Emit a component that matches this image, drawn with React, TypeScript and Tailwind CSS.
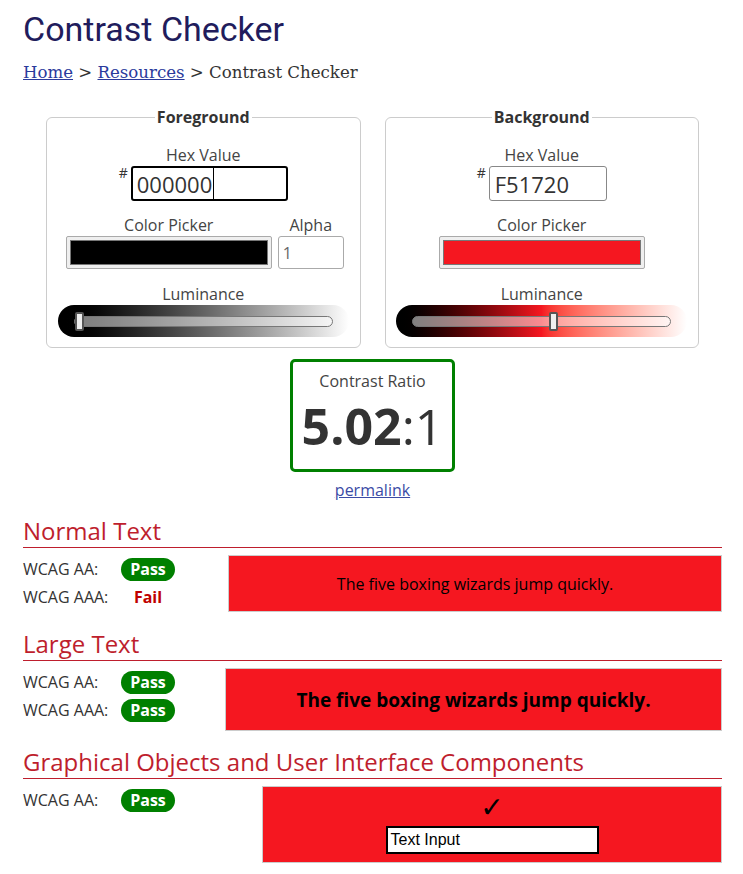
import React from 'react';

const body = "font-['Open_Sans',sans-serif]";

function Badge({ pass }: { pass: boolean }) {
    if (!pass) {
        return <span className="inline-flex h-[23px] w-[54px] items-center justify-center font-bold text-[#c00000]">Fail</span>;
    }
    return (
        <span className="inline-flex h-[23px] w-[54px] items-center justify-center rounded-full bg-[#008000] font-bold text-white">
            Pass
        </span>
    );
}

function Row({ label, pass }: { label: string; pass: boolean }) {
    return (
        <div className="flex h-[28px] items-center">
            <span className="w-[98px] text-[#333]">{label}</span>
            <Badge pass={pass} />
        </div>
    );
}

function Slider({ gradient, thumb }: { gradient: string; thumb: number }) {
    return (
        <div className={`mx-auto flex h-[32px] w-[291px] items-center rounded-full px-[16px] ${gradient}`}>
            <div className="relative h-[11px] flex-1 rounded-full border border-[#777] bg-white/50">
                <div
                    className="absolute top-[-5px] h-[19px] w-[9px] rounded-[2px] border-2 border-[#555] bg-[#eee]"
                    style={{ left: thumb }}
                />
            </div>
        </div>
    );
}

function Swatch({ color }: { color: string }) {
    return (
        <div className="flex h-[33px] w-[206px] rounded-[2px] border border-[#aaa] bg-[#efefef] p-[3px]">
            <div className={`flex-1 border border-[#777] ${color}`} />
        </div>
    );
}

export default function App() {
    return (
        <div className={`min-h-[874px] bg-white pl-[23px] pr-[21px] pt-[9px] ${body} text-[16px] leading-[22px] text-[#444]`}>
            <h1 className="font-['Roboto',sans-serif] text-[34px] leading-[40px] text-[#211c5c]">Contrast Checker</h1>

            <nav className="mt-[11px] font-['DejaVu_Serif',serif] text-[16.6px] leading-[26px] text-[#333]">
                <a className="text-[#2a3a9c] underline">Home</a> &gt; <a className="text-[#2a3a9c] underline">Resources</a> &gt; Contrast Checker
            </nav>

            <div className="mt-[20px] grid grid-cols-2 gap-[24px] px-[23px]">
                {/* Foreground */}
                <fieldset className="rounded-[6px] border border-[#ccc] px-[10px] pb-[10px]">
                    <legend className="mx-auto px-[2px] font-bold text-[#333]">Foreground</legend>
                    <div className="mt-[16px] text-center">Hex Value</div>
                    <div className="flex justify-center">
                        <span className="mr-[3px] text-[14px] leading-[14px] text-[#333]">#</span>
                        <div className="flex h-[35px] w-[157px] items-center rounded-[3px] border-2 border-black pl-[4px] text-[22px] text-[#333]">
                            000000<span className="ml-[1px] h-[33px] w-px bg-black" />
                        </div>
                    </div>
                    <div className="mt-[13px] flex justify-center gap-[6px] pl-[3px]">
                        <div className="flex flex-col items-center">
                            <span>Color Picker</span>
                            <Swatch color="bg-black" />
                        </div>
                        <div className="flex flex-col items-center">
                            <span>Alpha</span>
                            <div className="flex h-[33px] w-[66px] items-center rounded-[3px] border border-[#aaa] px-[4px] text-[#666]">1</div>
                        </div>
                    </div>
                    <div className="mt-[14px] text-center">Luminance</div>
                    <Slider gradient="bg-gradient-to-r from-black to-white" thumb={0} />
                </fieldset>

                {/* Background */}
                <fieldset className="rounded-[6px] border border-[#ccc] px-[10px] pb-[10px]">
                    <legend className="mx-auto px-[2px] font-bold text-[#333]">Background</legend>
                    <div className="mt-[16px] text-center">Hex Value</div>
                    <div className="flex justify-center">
                        <span className="mr-[3px] text-[14px] leading-[14px] text-[#333]">#</span>
                        <div className="flex h-[35px] w-[118px] items-center rounded-[3px] border border-[#888] pl-[5px] text-[22px] text-[#333]">
                            F51720
                        </div>
                    </div>
                    <div className="mt-[13px] flex flex-col items-center">
                        <span>Color Picker</span>
                        <Swatch color="bg-[#f51720]" />
                    </div>
                    <div className="mt-[14px] text-center">Luminance</div>
                    <Slider gradient="bg-gradient-to-r from-black via-[#f51720] to-white" thumb={136} />
                </fieldset>
            </div>

            <div className="mt-[11px] flex flex-col items-center">
                <div className="flex h-[113px] w-[165px] flex-col items-center rounded-[5px] border-[3px] border-[#008000] pt-[8px]">
                    <span>Contrast Ratio</span>
                    <div className="mt-[4px] text-[50px] leading-[60px] text-[#333]">
                        <span className="font-bold">5.02</span>:1
                    </div>
                </div>
                <a className="mt-[7px] text-[#3b4ba5] underline">permalink</a>
            </div>

            {/* Normal Text */}
            <h2 className="mt-[14px] border-b border-[#be1e2d] text-[24px] leading-[32px] text-[#be1e2d]">Normal Text</h2>
            <div className="mt-[7px] flex">
                <div className="w-[205px]">
                    <Row label="WCAG AA:" pass />
                    <Row label="WCAG AAA:" pass={false} />
                </div>
                <div className="flex h-[57px] flex-1 items-center justify-center border border-[#ccc] bg-[#f51720] text-black">
                    The five boxing wizards jump quickly.
                </div>
            </div>

            {/* Large Text */}
            <h2 className="mt-[16px] border-b border-[#be1e2d] text-[24px] leading-[32px] text-[#be1e2d]">Large Text</h2>
            <div className="mt-[7px] flex">
                <div className="w-[202px]">
                    <Row label="WCAG AA:" pass />
                    <Row label="WCAG AAA:" pass />
                </div>
                <div className="flex h-[63px] flex-1 items-center justify-center border border-[#ccc] bg-[#f51720] text-[19px] font-bold text-black">
                    The five boxing wizards jump quickly.
                </div>
            </div>

            {/* Graphical Objects */}
            <h2 className="mt-[15px] border-b border-[#be1e2d] text-[24px] leading-[32px] text-[#be1e2d]">
                Graphical Objects and User Interface Components
            </h2>
            <div className="mt-[7px] flex">
                <div className="w-[239px]">
                    <Row label="WCAG AA:" pass />
                </div>
                <div className="flex h-[77px] flex-1 flex-col items-center border border-[#ccc] bg-[#f51720] pt-[6px]">
                    <span className="font-['DejaVu_Sans',sans-serif] text-[28px] leading-[30px] text-black">✓</span>
                    <div className="mt-[3px] flex h-[28px] w-[213px] items-center border-2 border-black bg-white px-[3px] font-['Liberation_Sans',sans-serif] text-[16px] text-black">
                        Text Input
                    </div>
                </div>
            </div>
        </div>
    );
}
